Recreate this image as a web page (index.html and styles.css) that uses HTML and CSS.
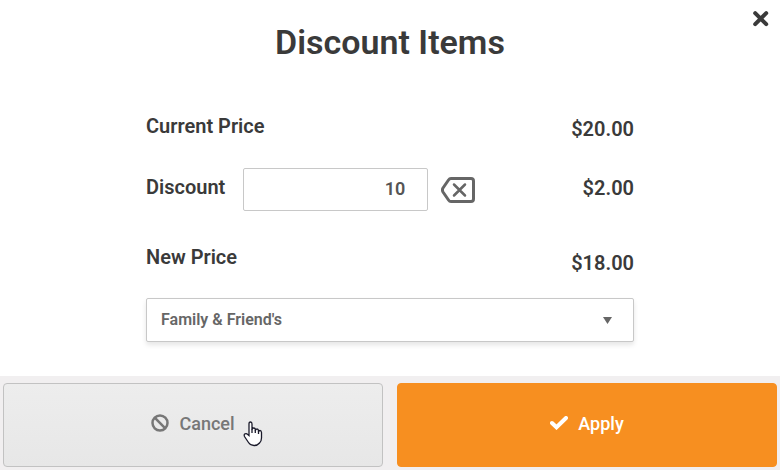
FILE: index.html
```html
<!DOCTYPE html>
<html lang="en">
<head>
    <meta charset="utf-8">
    <title>Discount Items</title>
    <link rel="stylesheet" href="styles.css">
</head>
<body>
    <form class="dialog" action="#">
        <button type="button" class="close" aria-label="Close">
            <svg width="18" height="18" viewBox="0 0 18 18"><path d="M3.200 3.200L14.200 14.200M14.200 3.200L3.200 14.200"/></svg>
        </button>
        <h1 class="title">Discount Items</h1>
        <div class="content">
            <div class="row">
                <span class="lbl">Current Price</span>
                <span class="price">$20.00</span>
            </div>
            <div class="row row-discount">
                <label class="lbl" for="discount">Discount</label>
                <input type="text" id="discount" class="amount" value="10">
                <button type="button" class="clear" aria-label="Clear discount">
                    <svg width="34" height="26" viewBox="0 0 34 26">
                        <path class="key" d="M10 1.5H30Q32.5 1.5 32.5 4V22Q32.5 24.5 30 24.5H10Q8.500 24.5 7.500 23L2 15Q.8 13 2 11L7.500 3Q8.500 1.500 10 1.500Z"/>
                        <path class="cross" d="M13 7.500L24 18.500M24 7.500L13 18.500"/>
                    </svg>
                </button>
                <span class="price">$2.00</span>
            </div>
            <div class="row row-total">
                <span class="lbl">New Price</span>
                <span class="price">$18.00</span>
            </div>
            <select class="reason" aria-label="Discount type">
                <option>Family &amp; Friend's</option>
            </select>
        </div>
        <div class="footer">
            <button type="button" class="btn btn-cancel">
                <svg width="18" height="18" viewBox="0 0 18 18"><circle cx="9" cy="9" r="7.500"/><path d="M3.700 3.700L14.300 14.300"/></svg>
                Cancel
                <svg class="pointer" width="20" height="26" viewBox="0 0 20 26">
                    <path d="M6 14.500V3Q6 1 7.500 1T9 3V9Q9 7 10.700 7T12.300 9V10Q12.500 8 14 8T15.500 10V11Q15.700 9.500 17 9.500T18.500 11.500V17Q18.500 20 16.500 22Q14.500 24.500 11 24.500Q7.500 24.500 5.500 21.500L1.500 15.500Q.7 13.500 2 12.800Q3.500 12.200 4.500 13.200Z"/>
                    <path d="M9 8.500V12M12.300 9.500V12M15.500 10.500V13"/>
                </svg>
            </button>
            <button type="submit" class="btn btn-apply">
                <svg width="18" height="14" viewBox="0 0 18 14"><path d="M2 7L6.500 11.300L16 2"/></svg>
                Apply
            </button>
        </div>
    </form>
</body>
</html>
```

FILE: styles.css
```css
body
{
    margin: 0;
    background-color: white;
    color: #3a3a3a;
    font-family: Roboto, "Liberation Sans", sans-serif;
}
button,input,select
{
    font-family: inherit;
    box-sizing: border-box;
}
svg
{
    display: block;
    fill: none;
    stroke: currentColor;
}
.dialog
{
    position: relative;
    display: flex;
    flex-direction: column;
    min-height: 100vh;
}
.close
{
    position: absolute;
    top: 10px;
    right: 10px;
    padding: 0;
    border: none;
    background: none;
    color: #3a3a3a;
    stroke-width: 4;
    stroke-linecap: round;
}
.title
{
    margin: 22px 0 52px;
    font-size: 34px;
    font-weight: 600;
    line-height: 40px;
    text-align: center;
}
.content
{
    width: 100%;
    max-width: 488px;
    margin: 0 auto 34px;
}
.row
{
    display: flex;
    align-items: flex-start;
    min-height: 30px;
    font-size: 20px;
    font-weight: 600;
    line-height: 24px;
}
.price
{
    margin-left: auto;
    line-height: 30px;
}
.row-discount
{
    align-items: center;
    margin: 24px 0 34px;
}
.row-discount .lbl
{
    padding-bottom: 5px;
}
.row-discount .price
{
    padding-bottom: 3px;
}
.row-total .price
{
    padding-top: 3px;
}
.amount
{
    width: 185px;
    height: 43px;
    margin: 0 13px 0 18px;
    padding: 0 22px 2px;
    border: 1px solid #c8c8c8;
    border-radius: 2px;
    background-color: white;
    color: #555;
    font-size: 18px;
    font-weight: 600;
    text-align: right;
}
.clear
{
    padding: 0;
    border: none;
    background: none;
    color: #666;
}
.key
{
    stroke-width: 3;
}
.cross
{
    stroke-width: 2.5;
    stroke-linecap: round;
}
.reason
{
    display: block;
    width: 100%;
    height: 44px;
    margin-top: 20px;
    padding: 0 14px 2px;
    border: 1px solid #c8c8c8;
    border-radius: 2px;
    background: white url("data:image/svg+xml,%3Csvg xmlns='http://www.w3.org/2000/svg' width='10' height='7'%3E%3Cpath d='M0 0H9L4.500 7Z' fill='%23666'/%3E%3C/svg%3E") no-repeat right 20px center;
    box-shadow: 0 3px 5px rgba(0,0,0,0.1);
    color: #666;
    font-size: 16px;
    font-weight: 600;
    appearance: none;
}
.footer
{
    display: flex;
    gap: 14px;
    margin-top: auto;
    padding: 7px 3px 3px;
    background-color: #f1eff0;
}
.btn
{
    position: relative;
    display: flex;
    flex: 1;
    align-items: center;
    justify-content: center;
    gap: 10px;
    height: 84px;
    padding: 0 0 4px;
    border: 1px solid #c2c2c2;
    border-radius: 4px;
    font-size: 18px;
    font-weight: 500;
}
.btn-cancel
{
    background: linear-gradient(#ededed,#e7e7e7);
    color: #777;
    stroke-width: 2.5;
}
.btn-apply
{
    border-color: #f78f20;
    background-color: #f78f20;
    color: white;
    stroke-width: 4;
    stroke-linecap: round;
}
.pointer
{
    position: absolute;
    top: 37px;
    left: calc(50% + 50px);
    fill: white;
    stroke: #1a1a2a;
    stroke-width: 1.3;
}
```
